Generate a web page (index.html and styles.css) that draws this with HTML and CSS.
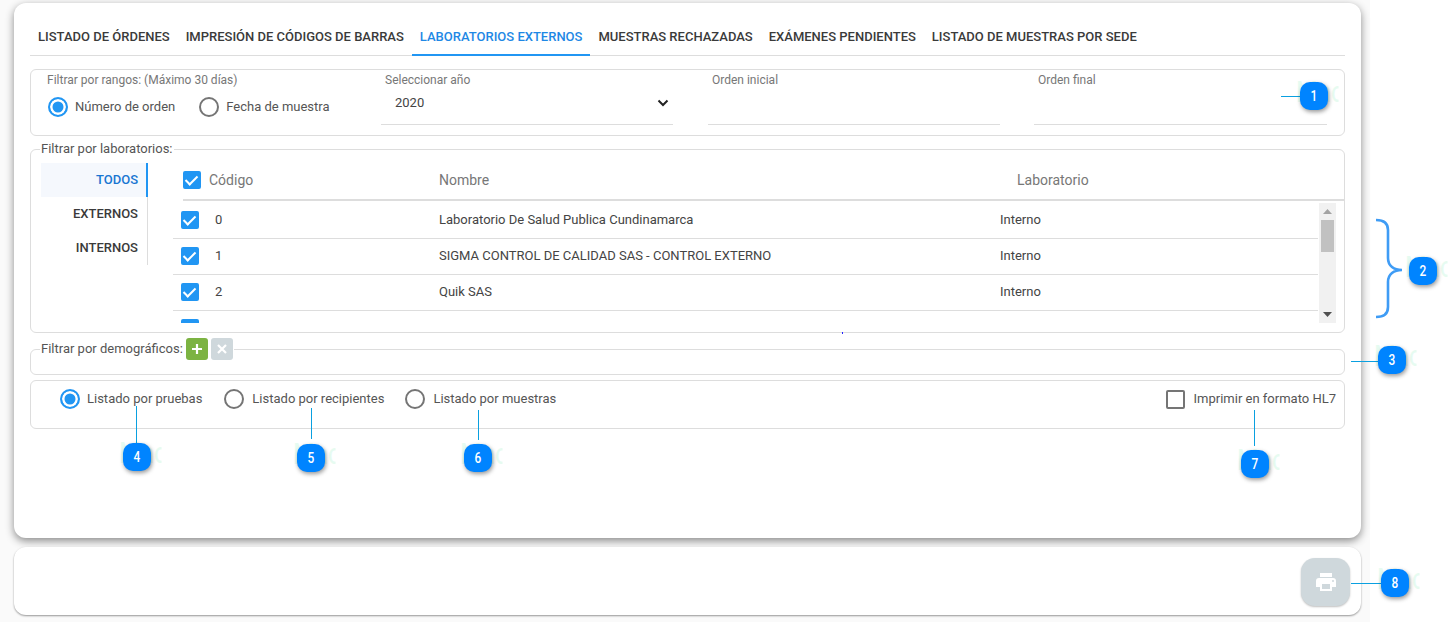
FILE: index.html
```html
<!DOCTYPE html>
<html lang="es">
<head>
	<meta charset="UTF-8">
	<title>Listado de órdenes</title>
	<link rel="stylesheet" href="styles.css">
</head>
<body>
	<div class="page">
		<div class="card card-main">
			<ul class="tabs">
				<li>Listado de órdenes</li>
				<li>Impresión de códigos de barras</li>
				<li class="cur">Laboratorios externos</li>
				<li>Muestras rechazadas</li>
				<li>Exámenes pendientes</li>
				<li>Listado de muestras por sede</li>
			</ul>

			<!-- rangos -->
			<div class="box box-range">
				<div class="range-type">
					<span class="small-label">Filtrar por rangos: (Máximo 30 días)</span>
					<div class="radios">
						<label class="opt"><i class="radio on"></i>Número de orden</label>
						<label class="opt"><i class="radio"></i>Fecha de muestra</label>
					</div>
				</div>
				<div class="field field-year">
					<span class="small-label">Seleccionar año</span>
					<div class="field-value">2020
						<svg width="12" height="8" viewBox="0 0 12 8"><path d="M1.500 1.500 6 6l4.500-4.500" fill="none" stroke="#222" stroke-width="2"/></svg>
					</div>
				</div>
				<div class="field field-start">
					<span class="small-label">Orden inicial</span>
					<div class="field-value"></div>
				</div>
				<div class="field field-end">
					<span class="small-label">Orden final</span>
					<div class="field-value"></div>
				</div>
			</div>

			<!-- laboratorios -->
			<fieldset class="box box-labs">
				<legend>Filtrar por laboratorios:</legend>
				<ul class="side">
					<li class="cur">Todos</li>
					<li>Externos</li>
					<li>Internos</li>
				</ul>
				<div class="table">
					<div class="thead">
						<i class="check on"></i>
						<span class="th-code">Código</span>
						<span>Nombre</span>
						<span>Laboratorio</span>
					</div>
					<div class="tbody">
						<div class="rows">
							<div class="row"><i class="check on"></i><span>0</span><span>Laboratorio De Salud Publica Cundinamarca</span><span>Interno</span></div>
							<div class="row"><i class="check on"></i><span>1</span><span>SIGMA CONTROL DE CALIDAD SAS - CONTROL EXTERNO</span><span>Interno</span></div>
							<div class="row"><i class="check on"></i><span>2</span><span>Quik SAS</span><span>Interno</span></div>
							<div class="row"><i class="check on"></i></div>
						</div>
						<div class="scroll">
							<svg width="17" height="17" viewBox="0 0 17 17"><path d="M8.500 6 13 11H4z" fill="#a3a3a3"/></svg>
							<div class="scroll-track"><div class="scroll-thumb"></div></div>
							<svg width="17" height="17" viewBox="0 0 17 17"><path d="M8.500 11 13 6H4z" fill="#505050"/></svg>
						</div>
					</div>
				</div>
			</fieldset>

			<!-- demograficos -->
			<fieldset class="box box-demo">
				<legend>Filtrar por demográficos:
					<button class="mini mini-add"><svg width="12" height="12" viewBox="0 0 12 12"><path d="M6 1v10M1 6h10" stroke="#fff" stroke-width="2.200"/></svg></button>
					<button class="mini mini-del"><svg width="12" height="12" viewBox="0 0 12 12"><path d="M2 2l8 8M10 2l-8 8" stroke="#fff" stroke-width="2.200"/></svg></button>
				</legend>
			</fieldset>

			<!-- tipo de listado -->
			<div class="box box-list">
				<label class="opt"><i class="radio on"></i>Listado por pruebas</label>
				<label class="opt"><i class="radio"></i>Listado por recipientes</label>
				<label class="opt"><i class="radio"></i>Listado por muestras</label>
				<label class="opt opt-hl7"><i class="check"></i>Imprimir en formato HL7</label>
			</div>
		</div>

		<div class="card card-foot">
			<button class="print">
				<svg width="24" height="24" viewBox="0 0 24 24"><path fill="#fff" d="M19 8H5a3 3 0 0 0-3 3v6h4v4h12v-4h4v-6a3 3 0 0 0-3-3zm-3 11H8v-5h8v5zm3-7a1 1 0 1 1 0-2 1 1 0 0 1 0 2zM18 3H6v4h12V3z"/></svg>
			</button>
		</div>
	</div>

	<!-- anotaciones -->
	<span class="line line-h" style="left:1281px;top:96px;width:19px"></span>
	<span class="line line-h" style="left:1351px;top:361px;width:27px"></span>
	<span class="line line-h" style="left:1351px;top:583px;width:30px"></span>
	<span class="line line-v" style="left:136px;top:406px;height:37px"></span>
	<span class="line line-v" style="left:311px;top:408px;height:31px"></span>
	<span class="line line-v" style="left:478px;top:410px;height:30px"></span>
	<span class="line line-v" style="left:1254px;top:410px;height:36px"></span>
	<span class="speck"></span>
	<svg class="brace" width="28" height="102" viewBox="0 0 28 102"><path d="M0 2c8 0 12 3 12 10v28c0 8 6 12 14 12-8 0-14 4-14 12v25c0 7-4 10-12 10" fill="none" stroke="#3f9cf5" stroke-width="2.600"/></svg>

	<span class="badge" style="left:1300px;top:82px"><b>1</b></span>
	<span class="badge" style="left:1409px;top:257px"><b>2</b></span>
	<span class="badge" style="left:1378px;top:346px"><b>3</b></span>
	<span class="badge" style="left:123px;top:443px"><b>4</b></span>
	<span class="badge" style="left:297px;top:444px"><b>5</b></span>
	<span class="badge" style="left:464px;top:444px"><b>6</b></span>
	<span class="badge" style="left:1241px;top:450px"><b>7</b></span>
	<span class="badge" style="left:1381px;top:569px"><b>8</b></span>
</body>
</html>
```

FILE: styles.css
```css
html, body{
	margin: 0;
	padding: 0;
	height: 100%;
	background-color: #fff;
	overflow: hidden;
}
body{
	position: relative;
	z-index: 0;
	font-family: Roboto, "Liberation Sans", sans-serif;
	font-size: 13px;
	color: #555;
}
ul, li{
	margin: 0;
	padding: 0;
	list-style: none;
}
i{
	font-style: normal;
}

.page{
	position: relative;
	z-index: -2;
	width: 1347px;
	height: 622px;
	padding: 3px 9px 0 14px;
	background-color: #fafafa;
}
.card{
	background-color: #fff;
	border-radius: 12px;
}
.card-main{
	height: 535px;
	box-sizing: border-box;
	padding: 15px 16px 0;
	box-shadow: 0 3px 8px rgba(0, 0, 0, .45);
}
.card-foot{
	display: flex;
	justify-content: flex-end;
	align-items: center;
	height: 68px;
	box-sizing: border-box;
	margin-top: 9px;
	padding: 1px 11px 0 0;
	box-shadow: 0 1px 2px rgba(0, 0, 0, .4);
}

/* tabs */
.tabs{
	display: flex;
	height: 37px;
	border-bottom: 1px solid #ddd;
}
.tabs li{
	padding: 0 8px;
	line-height: 37px;
	font-weight: 500;
	color: #3a3a3a;
	text-transform: uppercase;
	white-space: nowrap;
}
.tabs li.cur{
	height: 36px;
	color: #1e88e5;
	border-bottom: 2px solid #2196f3;
}

/* cajas */
.box{
	box-sizing: border-box;
	margin: 0;
	padding: 0;
	min-width: 0;
	border: 1px solid #ddd;
	border-radius: 6px;
}
.box legend{
	margin-left: 9px;
	padding: 0 1px;
	line-height: 14px;
}
.box-range{
	display: flex;
	height: 67px;
	margin-top: 13px;
}
.small-label{
	display: block;
	font-size: 12px;
	line-height: 14px;
	color: #777;
}
.range-type{
	width: 333px;
	padding: 3px 0 0 17px;
}
.range-type .small-label{
	margin-left: -1px;
}
.radios{
	display: flex;
	gap: 24px;
	margin-top: 10px;
}
.opt{
	display: flex;
	align-items: center;
	gap: 7px;
	line-height: 20px;
	white-space: nowrap;
}
.radio{
	box-sizing: border-box;
	width: 20px;
	height: 20px;
	border: 2px solid #757575;
	border-radius: 50%;
	background-color: #fff;
}
.radio.on{
	border-color: #2196f3;
	background-color: #2196f3;
	box-shadow: inset 0 0 0 2.500px #fff;
}
.field{
	box-sizing: border-box;
	height: 55px;
	width: 292px;
	padding-top: 3px;
}
.field .small-label{
	padding-left: 4px;
}
.field-value{
	display: flex;
	justify-content: space-between;
	align-items: center;
	box-sizing: border-box;
	height: 38px;
	padding: 0 4px 7px 14px;
	border-bottom: 1px solid #ddd;
	color: #444;
}
.field-value svg{
	margin-top: 2px;
}
.field-start{
	margin-left: 35px;
}
.field-end{
	width: 293px;
	margin-left: 34px;
}

/* laboratorios */
.box-labs{
	display: flex;
	height: 191px;
	margin-top: 6px;
	padding: 0 0 0 10px;
}
.box-labs legend{
	margin-left: -1px;
}
.side{
	flex: none;
	width: 106px;
	height: 102px;
	margin-top: 7px;
	border-right: 1px solid #ddd;
}
.side li{
	height: 34px;
	padding-right: 9px;
	line-height: 34px;
	text-align: right;
	font-weight: 500;
	color: #3a3a3a;
	text-transform: uppercase;
}
.side li.cur{
	margin-right: -1px;
	padding-right: 8px;
	color: #1976d2;
	background-color: #f5f8fd;
	border-right: 2px solid #2196f3;
}
.table{
	flex: 1;
	margin-left: 35px;
	min-width: 0;
}
.check{
	box-sizing: border-box;
	width: 18px;
	height: 18px;
	border: 2px solid #757575;
	border-radius: 2px;
	background-color: #fff;
}
.check.on{
	position: relative;
	border-color: #2196f3;
	background-color: #2196f3;
}
.check.on::after{
	content: "";
	position: absolute;
	left: 3px;
	top: 0;
	width: 5px;
	height: 10px;
	border: solid #fff;
	border-width: 0 2px 2px 0;
	transform: rotate(45deg);
}
.thead{
	display: grid;
	grid-template-columns: 18px 238px 578px auto;
	align-items: center;
	height: 39px;
	margin-top: 4px;
	border-bottom: 2px solid #ddd;
	font-size: 14px;
	color: #777;
}
.th-code{
	padding-left: 8px;
}
.tbody{
	display: flex;
	height: 122px;
	margin-left: -10px;
}
.rows{
	flex: 1;
	height: 122px;
	overflow: hidden;
}
.row{
	display: grid;
	grid-template-columns: 18px 240px 561px auto;
	align-items: center;
	box-sizing: border-box;
	height: 36px;
	padding-left: 8px;
	border-bottom: 1px solid #ddd;
	color: #444;
}
.row:first-child{
	height: 38px;
}
.row + .row span{
	margin-bottom: 2px;
}
.row + .row .check{
	margin-bottom: 1px;
}
.row span:nth-child(2){
	padding-left: 16px;
}
.scroll{
	display: flex;
	flex-direction: column;
	flex: none;
	width: 17px;
	height: 120px;
	margin: 2px 8px 0 1px;
	background-color: #f1f1f1;
}
.scroll-track{
	flex: 1;
}
.scroll-thumb{
	width: 13px;
	height: 32px;
	margin-left: 2px;
	background-color: #c1c1c1;
}

/* demograficos */
.box-demo{
	height: 37px;
	margin-top: 5px;
}
.box-demo legend{
	display: flex;
	align-items: center;
	height: 22px;
	padding: 0 1px;
}
.mini{
	display: flex;
	justify-content: center;
	align-items: center;
	width: 22px;
	height: 22px;
	margin-left: 3px;
	padding: 0;
	border: 0;
	border-radius: 3px;
}
.mini-add{
	background-color: #7cb342;
}
.mini-del{
	background-color: #cfd8dc;
}

/* listado */
.box-list{
	display: flex;
	height: 49px;
	margin-top: 5px;
	padding: 8px 8px 0 29px;
	align-items: flex-start;
}
.box-list .opt{
	margin-right: 22px;
}
.box-list .opt:nth-child(2){
	margin-right: 21px;
	gap: 8px;
}
.box-list .opt:nth-child(3){
	gap: 8px;
}
.box-list .opt-hl7{
	margin: 0 0 0 auto;
	gap: 9px;
}
.box-list .opt .check{
	width: 19px;
	height: 19px;
}

/* imprimir */
.print{
	display: flex;
	justify-content: center;
	align-items: center;
	width: 49px;
	height: 48px;
	padding: 0;
	border: 0;
	border-radius: 14px;
	background-color: #cfd8dc;
	box-shadow: 0 1px 2px rgba(0, 0, 0, .25);
}

/* anotaciones */
.line{
	position: absolute;
	background-color: #0aa0e0;
}
.line-h{
	height: 1px;
}
.line-v{
	width: 1px;
}
.speck{
	position: absolute;
	left: 842px;
	top: 332px;
	width: 1px;
	height: 2px;
	background-color: #22f;
}
.brace{
	position: absolute;
	left: 1376px;
	top: 218px;
}
.badge{
	position: absolute;
	display: flex;
	justify-content: center;
	align-items: center;
	width: 28px;
	height: 28px;
	border-radius: 10px;
	background-color: #0084ff;
	box-shadow: 1px 2px 4px rgba(0, 0, 0, .4);
	color: #fff;
	font-size: 14px;
}
.badge b{
	font-weight: 500;
	transform: scaleX(.85);
}
/* marca de agua que asoma por detras */
.badge::before{
	content: "Mac";
	position: absolute;
	left: -4px;
	top: -6px;
	z-index: -1;
	width: 50px;
	overflow: hidden;
	font-size: 29px;
	line-height: 32px;
	white-space: nowrap;
	color: #e6fbf1;
	transform: scaleX(.85);
	transform-origin: left top;
}
```
